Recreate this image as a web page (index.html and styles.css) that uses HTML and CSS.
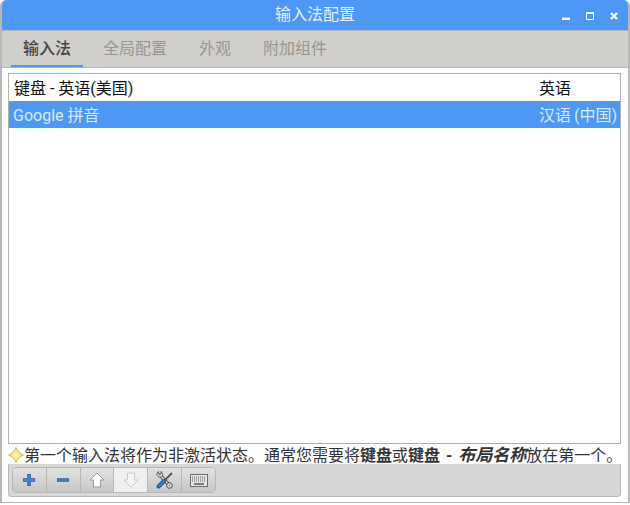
FILE: index.html
```html
<!DOCTYPE html>
<html lang="zh">
<head>
<meta charset="utf-8">
<title>输入法配置</title>
<link rel="stylesheet" href="styles.css">
</head>
<body>
<div class="window">
  <header class="titlebar">
    <span class="title">输入法配置</span>
    <div class="controls">
      <svg class="ctl" width="10" height="10" viewBox="0 0 10 10"><rect x="1" y="6.500" width="8" height="2.500" fill="#fff"/></svg>
      <svg class="ctl" width="10" height="10" viewBox="0 0 10 10"><path d="M1.500 2.500h7v6h-7z" fill="none" stroke="#fff"/><rect x="1" y="1" width="8" height="2" fill="#fff"/></svg>
      <svg class="ctl" width="10" height="10" viewBox="0 0 10 10"><path d="M2 2l6 6M8 2l-6 6" stroke="#fff" stroke-width="2.400" fill="none"/></svg>
    </div>
  </header>
  <nav class="tabs">
    <span class="tab active">输入法</span>
    <span class="tab">全局配置</span>
    <span class="tab">外观</span>
    <span class="tab">附加组件</span>
  </nav>
  <main class="content">
    <div class="list">
      <div class="row"><span class="col-name">键盘 - 英语(美国)</span><span class="col-lang">英语</span></div>
      <div class="row selected"><span class="col-name">Google 拼音</span><span class="col-lang">汉语 (中国)</span></div>
    </div>
    <p class="hint">
      <svg class="star" width="16" height="16" viewBox="0 0 16 16"><defs><radialGradient id="starfill"><stop offset="0" stop-color="#fff9c8"/><stop offset="1" stop-color="#f4d85a"/></radialGradient></defs><path d="M8 .5 C9.200 3.800 11.800 6.500 15.500 8 C11.800 9.500 9.200 12.200 8 15.500 C6.800 12.200 4.200 9.500 .5 8 C4.200 6.500 6.800 3.800 8 .5z" fill="url(#starfill)" stroke="#d2b650" stroke-width="1"/></svg><span>第一个输入法将作为非激活状态。通常您需要将<b>键盘</b>或<b>键盘 - <i>布局名称</i></b>放在第一个。</span>
    </p>
    <div class="toolbar">
      <div class="btngroup">
        <button class="btn"><svg width="16" height="16" viewBox="0 0 16 16"><path d="M8 2v12M2 8h12" stroke="#2a5fa5" stroke-width="3.600" fill="none"/><path d="M8 3v10M3 8h10" stroke="#4a86cf" stroke-width="1.800" fill="none"/></svg></button>
        <button class="btn"><svg width="16" height="16" viewBox="0 0 16 16"><path d="M2 8h12" stroke="#2a5fa5" stroke-width="3.600" fill="none"/><path d="M3 8h10" stroke="#4a86cf" stroke-width="1.600" fill="none"/></svg></button>
        <button class="btn"><svg width="18" height="18" viewBox="0 0 18 18"><path d="M9 2 16 9h-3.500v7h-7V9H2z" fill="#fff" stroke="#9a9a98" stroke-linejoin="round"/></svg></button>
        <button class="btn off"><svg width="18" height="18" viewBox="0 0 18 18"><path d="M9 16 16 9h-3.500V2h-7v7H2z" fill="#f4f4f4" stroke="#c8c8c6" stroke-linejoin="round"/></svg></button>
        <button class="btn"><svg width="20" height="20" viewBox="0 0 20 20"><path d="M5 5 14 15" stroke="#4e4e4e" stroke-width="3.400" fill="none"/><path d="M5 5 14 15" stroke="#dcdcda" stroke-width="1.700" fill="none"/><circle cx="14.500" cy="15.500" r="2.800" fill="#dcdcda" stroke="#4e4e4e"/><circle cx="14.500" cy="15.500" r=".9" fill="#8a8a88"/><path d="M3.500 1.500 C1.500 2.500 1.500 5.500 3 6.500 C4.500 7.500 6.500 7 7.500 6 C8 4 7.500 2.500 6 1.500 L6 4 L4 4.500z" fill="#dcdcda" stroke="#4e4e4e" stroke-width=".9"/><path d="M9.500 10.500 17 3" stroke="#555" stroke-width="1.800" fill="none"/><path d="M3.500 16.500 9 11" stroke="#1f4f8f" stroke-width="4" stroke-linecap="round" fill="none"/><path d="M3.500 16.500 9 11" stroke="#3f7fcb" stroke-width="1.800" stroke-linecap="round" fill="none"/></svg></button>
        <button class="btn"><svg width="18" height="16" viewBox="0 0 18 16"><rect x=".5" y="2.500" width="17" height="12" fill="#e8e8e6" stroke="#6a6a68"/><path d="M2 5h14M2 7h14M2 9h14" stroke="#555" stroke-dasharray="1 1" fill="none"/><path d="M4 12h10" stroke="#555" stroke-width="1.500" fill="none"/></svg></button>
      </div>
    </div>
  </main>
</div>
</body>
</html>
```
FILE: styles.css
```css
* { box-sizing: border-box; }
html, body { margin: 0; height: 100%; background: #fff; }
body { font-family: "Roboto", "Noto Sans CJK SC", "Liberation Sans", sans-serif; font-size: 16px; color: #222; overflow: hidden; }
.window { width: 630px; height: 503px; display: flex; flex-direction: column; border-radius: 6px 6px 0 0; overflow: hidden; background: #fff; border: solid #b8b8b6; border-width: 0 2px 1px 2px; }
.titlebar { height: 30px; margin: 0 -2px; background: #4d98f5; color: #e8f1fd; display: flex; align-items: center; justify-content: center; position: relative; flex: none; }
.title { font-size: 16px; line-height: 30px; }
.controls { position: absolute; right: 11px; top: 11px; display: flex; gap: 14px; }
.ctl { display: block; }
.tabs { height: 38px; flex: none; background: #d0cfcc; border-top: 1px solid #b4b4b2; border-bottom: 1px solid #b8b8b6; display: flex; gap: 8px; padding-left: 9px; }
.tab { padding: 0 12px; color: #97968f; line-height: 36px; height: 36px; }
.tab.active { color: #444; border-bottom: 2px solid #4d98f5; font-weight: 500; }
.content { flex: 1; min-height: 0; display: flex; flex-direction: column; padding: 5px 7px 5px 6px; }
.list { height: 371px; flex: none; border: 1px solid #b0b0ae; background: #fff; }
.row { height: 27px; padding-top: 2px; display: grid; grid-template-columns: 525px 1fr; align-items: center; padding-left: 5px; color: #111; line-height: 25px; white-space: nowrap; }
.row.selected { background: #4d98f5; color: #dcebfd; padding-left: 4px; grid-template-columns: 526px 1fr; }
.col-lang { word-spacing: -1px; }
.hint { margin: 0; height: 20px; padding-top: 2px; flex: none; display: flex; align-items: center; line-height: 18px; color: #333; white-space: nowrap; }
.hint b { word-spacing: 2px; }
.hint i { font-size: 17px; }
.star { display: block; flex: none; }
.toolbar { height: 33px; flex: none; background: #d8d8d6; border: solid #b8b8b6; border-width: 0 1px 1px 1px; border-radius: 0 0 4px 4px; padding: 3px 0 0 3px; }
.btngroup { display: flex; width: 204px; height: 26px; border: 1px solid #b6b6b4; border-radius: 4px; overflow: hidden; }
.btn { flex: 1; height: 100%; padding: 0; margin: 0; border: 0; border-right: 1px solid #b6b6b4; background: linear-gradient(#e2e2e0, #c6c6c4); display: flex; align-items: center; justify-content: center; }
.btn:last-child { border-right: 0; }
.btn.off { background: #efefef; }
.btn svg { display: block; }
```
